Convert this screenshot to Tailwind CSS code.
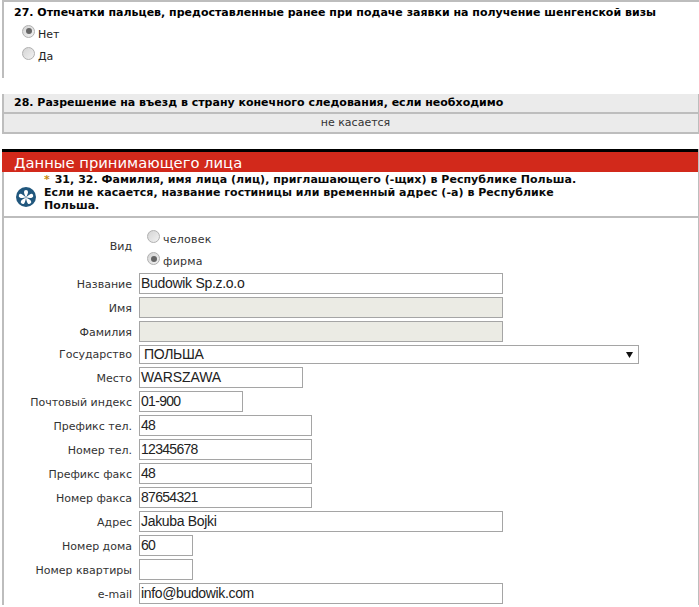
<!DOCTYPE html>
<html lang="ru">
<head>
  <meta charset="UTF-8"/>
  <title>Анкета</title>
  <script src="https://cdn.jsdelivr.net/npm/@tailwindcss/browser@4"></script>
</head>
<body class="bg-white text-black font-['DejaVu_Sans',sans-serif] text-[11px] overflow-hidden">
<div class="w-[699px] h-[607px] overflow-hidden">

  <!-- 27 -->
  <section class="ml-[2px] h-[79px] border-l-2 border-t-[3px] border-[#bdbdbd] -translate-y-px">
    <h3 class="pl-[10px] pt-[4px] font-bold leading-[14px]">27. Отпечатки пальцев, предоставленные ранее при подаче заявки на получение шенгенской визы</h3>
    <div class="pl-[18px] mt-[2px] flex items-center h-[22px]">
      <span class="w-[13px] h-[13px] rounded-full border border-[#b0b0b0] bg-linear-to-br from-[#d4d4d4] to-[#f2f2f2] flex items-center justify-center -mt-[4px]"><span class="w-[6px] h-[6px] rounded-full bg-[#666]"></span></span>
      <span class="ml-[3px] mt-[4px] text-[#222]">Нет</span>
    </div>
    <div class="pl-[18px] flex items-center h-[22px]">
      <span class="w-[13px] h-[13px] rounded-full border border-[#b0b0b0] bg-linear-to-br from-[#d4d4d4] to-[#f2f2f2] -mt-[4px]"></span>
      <span class="ml-[3px] mt-[4px] text-[#222]">Да</span>
    </div>
  </section>

  <!-- 28 -->
  <section class="ml-[2px] mt-[15px] border-l-2 border-r border-b-2 border-[#bdbdbd] bg-[#ebebeb]">
    <h3 class="pl-[10px] h-[18px] leading-[17px] font-bold">28. Разрешение на въезд в страну конечного следования, если необходимо</h3>
    <div class="h-[20px] border-t-2 border-[#bdbdbd] text-center leading-[17px] text-[#333] pl-[9px]">не касается</div>
  </section>

  <!-- Данные принимающего лица -->
  <section class="ml-[2px] mt-[15px] border-l-2 border-r border-[#bdbdbd] pb-px">
    <h2 class="border-t-[3px] border-black bg-[#d2291b] text-white text-[14.75px] h-[23px] leading-[22px] pl-[12px] -ml-[2px]">Данные принимающего лица</h2>
    <div class="relative h-[46px] border-b-2 border-[#bdbdbd] pl-[40px] pt-px font-bold leading-[13px] text-[#0a0a0a]">
      <svg class="absolute left-[12px] top-[15px]" width="20" height="20" viewBox="0 0 20 20">
        <circle cx="10" cy="10" r="10" fill="#21577d"/>
        <g fill="#fff">
          <path d="M10 10.5C8.6 8 8 6 8 5a2 2 0 0 1 4 0c0 1-.6 3-2 5.500Z"/>
          <path d="M10 10.5C8.6 8 8 6 8 5a2 2 0 0 1 4 0c0 1-.6 3-2 5.500Z" transform="rotate(72 10 10.500)"/>
          <path d="M10 10.5C8.6 8 8 6 8 5a2 2 0 0 1 4 0c0 1-.6 3-2 5.500Z" transform="rotate(144 10 10.500)"/>
          <path d="M10 10.5C8.6 8 8 6 8 5a2 2 0 0 1 4 0c0 1-.6 3-2 5.500Z" transform="rotate(216 10 10.500)"/>
          <path d="M10 10.5C8.6 8 8 6 8 5a2 2 0 0 1 4 0c0 1-.6 3-2 5.500Z" transform="rotate(288 10 10.500)"/>
        </g>
      </svg>
      <div class="w-[555px] tracking-[0.04px]"><span class="text-[#c98a10] mr-px">*</span> 31, 32. Фамилия, имя лица (лиц), приглашающего (-щих) в Республике Польша.<br/>Если не касается, название гостиницы или временный адрес (-а) в Республике<br/>Польша.</div>
    </div>

    <form class="pt-[12px]">
      <div class="flex h-[43px]">
        <span class="w-[128px] text-right text-[#333] pt-[9px]">Вид</span>
        <div class="ml-[15px]">
          <div class="flex items-start h-[22px]">
            <span class="w-[13px] h-[13px] rounded-full border border-[#b0b0b0] bg-linear-to-br from-[#d4d4d4] to-[#f2f2f2]"></span>
            <span class="ml-[3px] mt-[2px] text-[#333] tracking-[0.25px]">человек</span>
          </div>
          <div class="flex items-start h-[22px]">
            <span class="w-[13px] h-[13px] rounded-full border border-[#b0b0b0] bg-linear-to-br from-[#d4d4d4] to-[#f2f2f2] flex items-center justify-center"><span class="w-[6px] h-[6px] rounded-full bg-[#666]"></span></span>
            <span class="ml-[3px] mt-[2px] text-[#333] tracking-[0.25px]">фирма</span>
          </div>
        </div>
      </div>

      <div class="grid grid-cols-[128px_1fr] gap-x-[7px] gap-y-[3px] items-center text-[#333]">
        <label class="text-right pt-[3px]">Название</label>
        <div class="w-[364px] h-[21px] border border-[#a5a5a5] pl-px leading-[19px] text-[14px] tracking-[-0.3px] text-[#222] font-['Liberation_Sans',sans-serif]">Budowik Sp.z.o.o</div>
        <label class="text-right pt-[3px]">Имя</label>
        <div class="w-[364px] h-[21px] border border-[#a5a5a5] bg-[#ebebe4]"></div>
        <label class="text-right pt-[3px]">Фамилия</label>
        <div class="w-[364px] h-[21px] border border-[#a5a5a5] bg-[#ebebe4]"></div>
        <label class="text-right pt-[2px]">Государство</label>
        <div class="w-[500px] h-[19px] border border-[#a5a5a5] pl-[4px] pr-[5px] flex items-center justify-between leading-[17px] text-[14px] tracking-[-0.3px] text-[#222] font-['Liberation_Sans',sans-serif]">
          <span>ПОЛЬША</span>
          <svg width="7" height="6" viewBox="0 0 7 6"><path d="M0 0H7L3.5 6Z" fill="#111"/></svg>
        </div>
        <label class="text-right pt-[3px]">Место</label>
        <div class="w-[164px] h-[21px] border border-[#a5a5a5] pl-px leading-[19px] text-[14px] tracking-[-0.1px] text-[#222] font-['Liberation_Sans',sans-serif]">WARSZAWA</div>
        <label class="text-right pt-[3px]">Почтовый индекс</label>
        <div class="w-[104px] h-[21px] border border-[#a5a5a5] pl-px leading-[19px] text-[14px] tracking-[-0.7px] text-[#222] font-['Liberation_Sans',sans-serif]">01-900</div>
        <label class="text-right pt-[3px]">Префикс тел.</label>
        <div class="w-[173px] h-[21px] border border-[#a5a5a5] pl-px leading-[19px] text-[14px] tracking-[-0.7px] text-[#222] font-['Liberation_Sans',sans-serif]">48</div>
        <label class="text-right pt-[3px]">Номер тел.</label>
        <div class="w-[173px] h-[21px] border border-[#a5a5a5] pl-px leading-[19px] text-[14px] tracking-[-0.7px] text-[#222] font-['Liberation_Sans',sans-serif]">12345678</div>
        <label class="text-right pt-[3px]">Префикс факс</label>
        <div class="w-[173px] h-[21px] border border-[#a5a5a5] pl-px leading-[19px] text-[14px] tracking-[-0.7px] text-[#222] font-['Liberation_Sans',sans-serif]">48</div>
        <label class="text-right pt-[3px]">Номер факса</label>
        <div class="w-[173px] h-[21px] border border-[#a5a5a5] pl-px leading-[19px] text-[14px] tracking-[-0.7px] text-[#222] font-['Liberation_Sans',sans-serif]">87654321</div>
        <label class="text-right pt-[3px]">Адрес</label>
        <div class="w-[364px] h-[21px] border border-[#a5a5a5] pl-px leading-[19px] text-[14px] tracking-[-0.33px] text-[#222] font-['Liberation_Sans',sans-serif]">Jakuba Bojki</div>
        <label class="text-right pt-[3px]">Номер дома</label>
        <div class="w-[54px] h-[21px] border border-[#a5a5a5] pl-px leading-[19px] text-[14px] tracking-[-0.7px] text-[#222] font-['Liberation_Sans',sans-serif]">60</div>
        <label class="text-right pt-[3px]">Номер квартиры</label>
        <div class="w-[54px] h-[21px] border border-[#a5a5a5]"></div>
        <label class="text-right pt-[3px]">e-mail</label>
        <div class="w-[364px] h-[21px] border border-[#a5a5a5] pl-px leading-[19px] text-[14px] tracking-[-0.35px] text-[#222] font-['Liberation_Sans',sans-serif]">info@budowik.com</div>
      </div>
    </form>
  </section>
</div>
</body>
</html>
